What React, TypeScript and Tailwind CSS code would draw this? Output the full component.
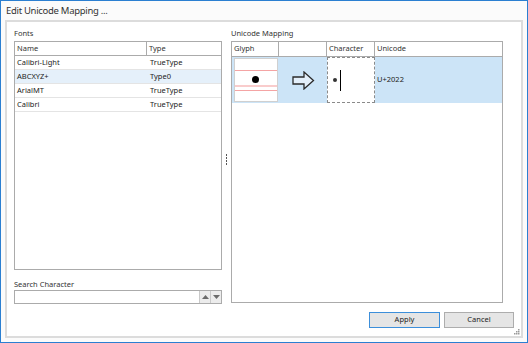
import React from "react";

const fonts = [
  { name: "Calibri-Light", type: "TrueType" },
  { name: "ABCXYZ+", type: "Type0", selected: true },
  { name: "ArialMT", type: "TrueType" },
  { name: "Calibri", type: "TrueType" },
];

function ArrowIcon() {
  return (
    <svg width="23" height="19" viewBox="0 0 23 19">
      <polygon
        points="1,6 12,6 12,1 21.5,9.5 12,18 12,13 1,13"
        fill="#e3effa"
        stroke="#2a2a2a"
        strokeWidth="1.3"
        strokeLinejoin="miter"
      />
    </svg>
  );
}

function SpinButtons() {
  return (
    <div className="flex h-full">
      <div className="w-[11px] h-full flex items-center justify-center border-l border-[#c9c9c9] bg-[#ececec]">
        <svg width="7" height="4" viewBox="0 0 7 4">
          <polygon points="0,4 3.5,0 7,4" fill="#6b6b6b" />
        </svg>
      </div>
      <div className="w-[11px] h-full flex items-center justify-center border-l border-[#c9c9c9] bg-[#ececec]">
        <svg width="7" height="4" viewBox="0 0 7 4">
          <polygon points="0,0 7,0 3.5,4" fill="#6b6b6b" />
        </svg>
      </div>
    </div>
  );
}

function ResizeGrip() {
  const dots = [
    [4, 0],
    [2, 2],
    [4, 2],
    [0, 4],
    [2, 4],
    [4, 4],
  ];
  return (
    <svg width="6" height="6" viewBox="0 0 6 6">
      {dots.map(([x, y], i) => (
        <rect key={i} x={x} y={y} width="1.5" height="1.5" fill="#9a9a9a" />
      ))}
    </svg>
  );
}

export default function App() {
  return (
    <div
      className="w-[528px] h-[343px] border border-[#2b7fd1] bg-[#fbfbfb] flex flex-col text-[#222]"
      style={{ fontFamily: '"Noto Sans", "Open Sans", sans-serif' }}
    >
      <div className="h-[19px] pl-[5px] pt-[1px] flex items-center text-[9.5px] tracking-[-0.3px] text-[#333] leading-none">
        Edit Unicode Mapping ...
      </div>

      <div className="relative flex-1 mx-[4px] mb-[4px] border-2 border-[#dcdcdc] bg-white flex flex-col pl-[7px] pr-[6px] pt-[5px] pb-[6px] text-[7.5px] leading-none">
        <div className="flex h-[277px]">
          {/* left column */}
          <div className="w-[208px] flex flex-col">
            <div className="h-[14px] flex items-center text-[#333]">Fonts</div>
            <div className="h-[229px] border border-[#ababab] bg-white flex flex-col">
              <div className="flex h-[14px] border-b border-[#ababab] text-[#333]">
                <div className="w-[132px] border-r border-[#ababab] flex items-center pl-[2px]">Name</div>
                <div className="flex-1 flex items-center pl-[2px]">Type</div>
              </div>
              {fonts.map((f) => (
                <div
                  key={f.name}
                  className={`flex h-[14px] border-b border-[#e4e4e4] ${f.selected ? "bg-[#e5f0fa]" : ""}`}
                >
                  <div className="w-[133px] flex items-center pl-[2px]">{f.name}</div>
                  <div className="flex-1 flex items-center pl-[2px]">{f.type}</div>
                </div>
              ))}
            </div>
            <div className="h-[20px] flex items-end pb-[2px] text-[#333]">Search Character</div>
            <div className="h-[14px] border border-[#ababab] bg-white flex justify-end">
              <SpinButtons />
            </div>
          </div>

          {/* splitter */}
          <div className="w-[9px] flex flex-col items-center justify-center pb-[12px]">
            <div className="flex flex-col gap-[1.5px]">
              <div className="w-[1.5px] h-[1.5px] bg-[#555]" />
              <div className="w-[1.5px] h-[1.5px] bg-[#555]" />
              <div className="w-[1.5px] h-[1.5px] bg-[#555]" />
              <div className="w-[1.5px] h-[1.5px] bg-[#555]" />
            </div>
          </div>

          {/* right column */}
          <div className="w-[272px] flex flex-col">
            <div className="h-[14px] flex items-center text-[#333]">Unicode Mapping</div>
            <div className="h-[262px] border border-[#ababab] bg-white flex flex-col">
              <div className="flex h-[15px] border-b border-[#ababab] text-[#333]">
                <div className="w-[47px] border-r border-[#ababab] flex items-center pl-[2px]">Glyph</div>
                <div className="w-[48px] border-r border-[#ababab]" />
                <div className="w-[48px] border-r border-[#ababab] flex items-center pl-[2px]">Character</div>
                <div className="flex-1 flex items-center pl-[2px]">Unicode</div>
              </div>
              <div className="flex h-[46px] bg-[#cce4f7]">
                <div className="w-[47px] flex items-center justify-center">
                  <div className="relative w-[44px] h-[44px] bg-white border border-[#d0d0d0]">
                    <div className="absolute left-0 right-0 top-[11px] h-px bg-[#f4a4a4]" />
                    <div className="absolute left-0 right-0 top-[26px] h-[2px] bg-[#f9cccc]" />
                    <div className="absolute left-0 right-0 top-[31px] h-px bg-[#f4a4a4]" />
                    <div className="absolute left-[17px] top-[17px] w-[7px] h-[7px] rounded-full bg-black" />
                  </div>
                </div>
                <div className="w-[48px] flex items-center justify-center pl-[1px]">
                  <ArrowIcon />
                </div>
                <div className="w-[48px] border border-dashed border-[#8a8a8a] bg-white flex items-center pl-[5px] gap-[3px]">
                  <div className="w-[4px] h-[4px] rounded-full bg-[#333]" />
                  <div className="w-px h-[21px] bg-black" />
                </div>
                <div className="flex-1 flex items-center pl-[2px]">U+2022</div>
              </div>
            </div>
          </div>
        </div>

        <div className="flex justify-end gap-[4px] mt-[8px] pr-[1px]">
          <button className="w-[71px] h-[16px] border border-[#3d8fda] bg-[#e5e5e5] text-[#222] flex items-center justify-center leading-none">
            Apply
          </button>
          <button className="w-[70px] h-[16px] border border-[#adadad] bg-[#e5e5e5] text-[#222] flex items-center justify-center leading-none">
            Cancel
          </button>
        </div>

        <div className="absolute right-[1px] bottom-[1px]">
          <ResizeGrip />
        </div>
      </div>
    </div>
  );
}
